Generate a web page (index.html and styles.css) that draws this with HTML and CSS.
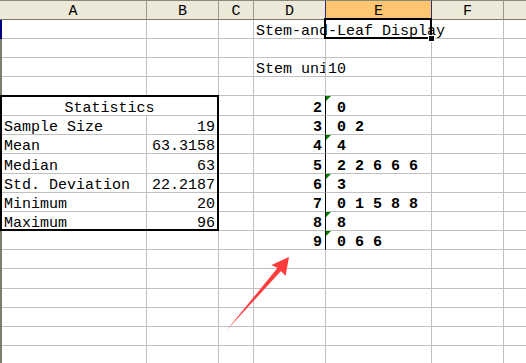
FILE: index.html
```html
<!DOCTYPE html>
<html lang="en">
<head>
<meta charset="utf-8">
<title>Stem-and-Leaf Display</title>
<link rel="stylesheet" href="styles.css">
</head>
<body>
<div class="sheet">
  <div class="col-heads">
    <div class="ch">A</div>
    <div class="ch">B</div>
    <div class="ch">C</div>
    <div class="ch before-active">D</div>
    <div class="ch active">E</div>
    <div class="ch">F</div>
    <div class="ch"></div>
  </div>

  <div class="cells">
    <!-- row 1 -->
    <div class="c active-row"></div><div class="c"></div><div class="c"></div>
    <div class="c spill">Stem-and-Leaf Display</div>
    <div class="c selected"><span class="fill-handle"></span></div>
    <div class="c"></div><div class="c"></div>
    <!-- row 2 -->
    <div class="c"></div><div class="c"></div><div class="c"></div><div class="c"></div><div class="c"></div><div class="c"></div><div class="c"></div>
    <!-- row 3 -->
    <div class="c"></div><div class="c"></div><div class="c"></div>
    <div class="c clip">Stem unit</div>
    <div class="c">10</div>
    <div class="c"></div><div class="c"></div>
    <!-- row 4 -->
    <div class="c"></div><div class="c"></div><div class="c"></div><div class="c"></div><div class="c"></div><div class="c"></div><div class="c"></div>

    <!-- summary table, A5:B11 -->
    <div class="stats">
      <div class="st-title">Statistics</div>
      <div class="st-label">Sample Size</div><div class="st-value">19</div>
      <div class="st-label">Mean</div><div class="st-value">63.3158</div>
      <div class="st-label">Median</div><div class="st-value">63</div>
      <div class="st-label">Std. Deviation</div><div class="st-value">22.2187</div>
      <div class="st-label">Minimum</div><div class="st-value">20</div>
      <div class="st-label last">Maximum</div><div class="st-value last">96</div>
    </div>

    <!-- rows 5-12: stems and leaves -->
    <div class="c"></div><div class="c stem">2</div><div class="c leaf flag"> 0</div><div class="c"></div><div class="c"></div>
    <div class="c"></div><div class="c stem">3</div><div class="c leaf"> 0 2</div><div class="c"></div><div class="c"></div>
    <div class="c"></div><div class="c stem">4</div><div class="c leaf flag"> 4</div><div class="c"></div><div class="c"></div>
    <div class="c"></div><div class="c stem">5</div><div class="c leaf"> 2 2 6 6 6</div><div class="c"></div><div class="c"></div>
    <div class="c"></div><div class="c stem">6</div><div class="c leaf flag"> 3</div><div class="c"></div><div class="c"></div>
    <div class="c"></div><div class="c stem">7</div><div class="c leaf"> 0 1 5 8 8</div><div class="c"></div><div class="c"></div>
    <div class="c"></div><div class="c stem">8</div><div class="c leaf flag"> 8</div><div class="c"></div><div class="c"></div>
    <div class="c"></div><div class="c"></div><div class="c"></div><div class="c stem">9</div><div class="c leaf flag"> 0 6 6</div><div class="c"></div><div class="c"></div>

    <!-- rows 13-18 -->
    <div class="c"></div><div class="c"></div><div class="c"></div><div class="c"></div><div class="c"></div><div class="c"></div><div class="c"></div>
    <div class="c"></div><div class="c"></div><div class="c"></div><div class="c"></div><div class="c"></div><div class="c"></div><div class="c"></div>
    <div class="c"></div><div class="c"></div><div class="c"></div><div class="c"></div><div class="c"></div><div class="c"></div><div class="c"></div>
    <div class="c"></div><div class="c"></div><div class="c"></div><div class="c"></div><div class="c"></div><div class="c"></div><div class="c"></div>
    <div class="c"></div><div class="c"></div><div class="c"></div><div class="c"></div><div class="c"></div><div class="c"></div><div class="c"></div>
    <div class="c"></div><div class="c"></div><div class="c"></div><div class="c"></div><div class="c"></div><div class="c"></div><div class="c"></div>
  </div>

  <!-- annotation arrow -->
  <svg class="arrow" width="526" height="363" viewBox="0 0 526 363" aria-hidden="true">
    <polygon points="226,331 277.5,268 271.5,265 289,257 285.5,276 281,271" fill="#ff3b3b"/>
  </svg>
</div>
</body>
</html>
```

FILE: styles.css
```css
html, body {
  margin: 0;
  padding: 0;
  background: #fff;
  overflow: hidden;
}

.sheet {
  position: relative;
  width: 526px;
  height: 363px;
  overflow: hidden;
  font-family: "Liberation Mono", "DejaVu Sans Mono", monospace;
  font-size: 15px;
  color: #000;
}

/* column letters */
.col-heads {
  display: grid;
  grid-template-columns: 147px 72px 35px 72px 106px 72px 72px;
  height: 20px;
}

.ch {
  box-sizing: border-box;
  height: 20px;
  background: #ece9d8;
  border-top: 1px solid #8a8878;
  border-bottom: 1px solid #7a7868;
  border-right: 1px solid #9a9888;
  text-align: center;
  line-height: 22px;
}

.ch.before-active {
  border-right-color: #2b2b86;
}

.ch.active {
  background: #ffc672;
  border-right-color: #2b2b86;
  border-bottom-color: #2b2b86;
}

/* cell grid */
.cells {
  display: grid;
  grid-template-columns: 145px 72px 35px 72px 106px 72px 72px;
  grid-template-rows: 19px 19px 19px 19px 20px 19px 19px 20px 19px 19px 19px 19px 19px 20px 19px 19px 19px 19px;
  border-left: 2px solid #7e7c6c;
}

.c {
  box-sizing: border-box;
  border-right: 1px solid #c0c0c0;
  border-bottom: 1px solid #c0c0c0;
  padding: 0 2px;
  display: flex;
  align-items: flex-end;
  line-height: 13px;
  white-space: nowrap;
  min-width: 0;
}

.c.active-row {
  box-shadow: -2px 0 0 #000080;
}

.c.spill {
  overflow: visible;
}

.c.clip {
  overflow: hidden;
}

/* active cell frame with its fill handle */
.c.selected {
  position: relative;
}

.c.selected::after {
  content: "";
  position: absolute;
  left: -2px;
  top: -2px;
  width: 108px;
  height: 21px;
  box-sizing: border-box;
  border: 2px solid #000;
}

.fill-handle {
  position: absolute;
  left: 102px;
  top: 15px;
  width: 5px;
  height: 5px;
  background: #000;
  border: 1px solid #fff;
  z-index: 1;
}

/* stem-and-leaf columns */
.c.stem {
  justify-content: flex-end;
  border-right-color: #000;
  font-weight: bold;
  padding-right: 3px;
}

.c.leaf {
  position: relative;
  white-space: pre;
  font-weight: bold;
}

.c.leaf.flag::before {
  content: "";
  position: absolute;
  left: 0;
  top: 0;
  border-top: 5px solid #008000;
  border-right: 5px solid transparent;
}

/* summary statistics table */
.stats {
  grid-column: 1 / 3;
  grid-row: 5 / 12;
  margin: -1px 0 0 -2px;
  box-sizing: border-box;
  border: 2px solid #000;
  background: #fff;
  display: grid;
  grid-template-columns: 145px 70px;
  grid-template-rows: 19px 19px 19px 20px 19px 19px 17px;
}

.stats > div {
  box-sizing: border-box;
  border-bottom: 1px solid #c0c0c0;
  padding: 0 2px;
  display: flex;
  align-items: flex-end;
  line-height: 13px;
  white-space: nowrap;
}

.stats > .last {
  border-bottom: 0;
  line-height: 11px;
}

.st-title {
  grid-column: 1 / 3;
  justify-content: center;
}

.st-label {
  border-right: 1px solid #c0c0c0;
}

.st-value {
  justify-content: flex-end;
}

.arrow {
  position: absolute;
  left: 0;
  top: 0;
  pointer-events: none;
}
```
